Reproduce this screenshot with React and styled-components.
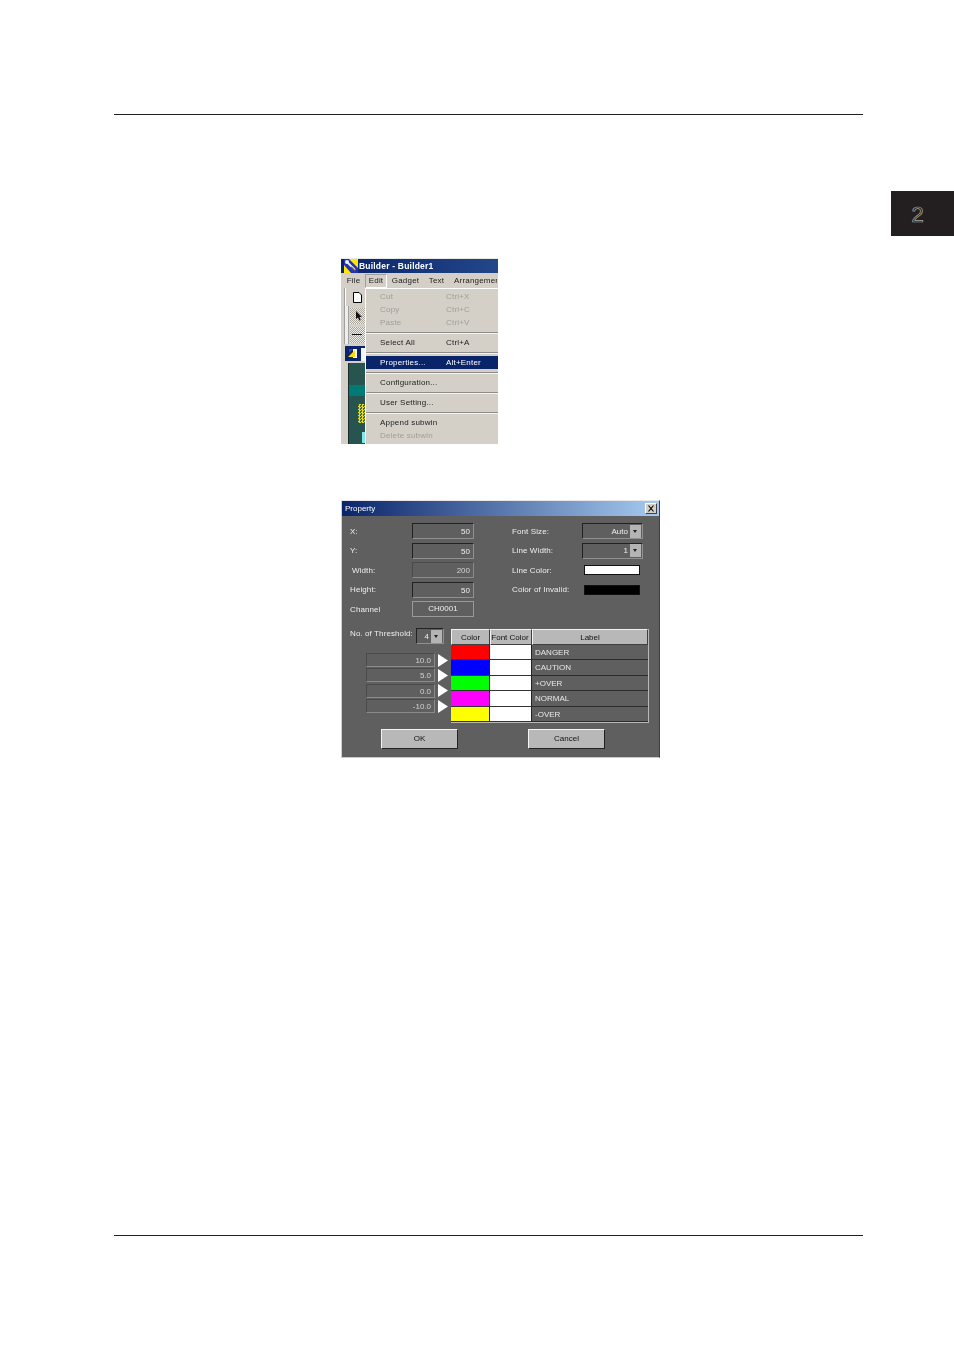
import React from 'react'
import styled, { createGlobalStyle } from 'styled-components'

const GlobalStyle = createGlobalStyle`
  html, body {
    margin: 0;
    padding: 0;
    background: #ffffff;
  }
  * {
    box-sizing: border-box;
  }
`

const menuItems = [
  { label: 'Cut', keys: 'Ctrl+X', off: true },
  { label: 'Copy', keys: 'Ctrl+C', off: true },
  { label: 'Paste', keys: 'Ctrl+V', off: true },
  { sep: true },
  { label: 'Select All', keys: 'Ctrl+A' },
  { sep: true },
  { label: 'Properties...', keys: 'Alt+Enter', active: true },
  { sep: true },
  { label: 'Configuration...' },
  { sep: true },
  { label: 'User Setting...' },
  { sep: true },
  { label: 'Append subwin' },
  { label: 'Delete subwin', off: true },
]

const leftFields = [
  { label: 'X:', value: '50' },
  { label: 'Y:', value: '50' },
  { label: 'Width:', value: '200', indent: true, soft: true },
  { label: 'Height:', value: '50' },
]

const thresholds = ['10.0', '5.0', '0.0', '-10.0']

const tableRows = [
  { color: '#ff0000', label: 'DANGER' },
  { color: '#0000ff', label: 'CAUTION' },
  { color: '#00ff00', label: '+OVER' },
  { color: '#ff00ff', label: 'NORMAL' },
  { color: '#ffff00', label: '-OVER' },
]

function App() {
  return (
    <>
      <GlobalStyle />
      <Page>
        <HeaderRule />
        <TabRow>
          <SideTab>2</SideTab>
        </TabRow>

        <Figures>
          <MenuShot>
            <AppTitle>
              <svg width="14" height="14" viewBox="0 0 14 14">
                <rect width="14" height="14" fill="#2030c0" />
                <path d="M5 0h9v9z" fill="#ffe800" />
                <path d="M0 6l7 8H0z" fill="#ffe800" />
                <path d="M3 3l8 8" stroke="#e8e8e8" strokeWidth="2" />
                <path d="M7 8l4 4" stroke="#555555" strokeWidth="1.500" />
                <circle cx="3" cy="3" r="2" fill="#f4f4f4" />
              </svg>
              <span>Builder - Builder1</span>
            </AppTitle>
            <MenuBar>
              <MenuName $width={23}>File</MenuName>
              <MenuName $width={22} $open>Edit</MenuName>
              <MenuName $width={37}>Gadget</MenuName>
              <MenuName $width={25}>Text</MenuName>
              <MenuName $width={49} $clipped>Arrangemer</MenuName>
            </MenuBar>
            <MenuBody>
              <ToolStrip>
                <ToolRow>
                  <ToolButton>
                    <svg width="9" height="11" viewBox="0 0 9 11">
                      <path d="M.5.5h5.500L8.500 3v7.500H.5z" fill="#fff" stroke="#000" />
                    </svg>
                  </ToolButton>
                </ToolRow>
                <ToolRow $tall>
                  <ToolButton $dither>
                    <ArrowGlyph width="8" height="10" viewBox="0 0 8 10">
                      <path d="M1 0v8l2-1.500 1.200 3 1.400-.6L4.500 6H7z" fill="#111" />
                    </ArrowGlyph>
                  </ToolButton>
                </ToolRow>
                <ToolRow $tall>
                  <ToolButton $dither>
                    <LineGlyph />
                  </ToolButton>
                </ToolRow>
                <ChildWindow>
                  <ChildTitle>
                    <svg width="10" height="11" viewBox="0 0 10 11">
                      <path d="M5 1h4v9H5z" fill="#f4f4f4" />
                      <path d="M0 9l7-7v7z" fill="#ffd800" />
                      <path d="M1 1h4L1 5z" fill="#3040d0" />
                    </svg>
                    <ChildDoc />
                  </ChildTitle>
                  <ChildCanvas>
                    <TealBar />
                    <CheckerBlock />
                    <CyanBlock />
                  </ChildCanvas>
                </ChildWindow>
              </ToolStrip>
              <Dropdown>
                {menuItems.map((item, i) =>
                  item.sep ? (
                    <MenuSep key={i} />
                  ) : (
                    <MenuItem key={i} $off={item.off} $active={item.active}>
                      <span>{item.label}</span>
                      <span>{item.keys}</span>
                    </MenuItem>
                  )
                )}
              </Dropdown>
            </MenuBody>
          </MenuShot>

          <Dialog>
            <DialogTitle>
              <span>Property</span>
              <CloseBox>
                <svg width="8" height="7" viewBox="0 0 8 7">
                  <path d="M1.500.5l5 6M6.500.5l-5 6" stroke="#000" strokeWidth="1.100" />
                </svg>
              </CloseBox>
            </DialogTitle>
            <DialogBody>
              <TopFields>
                <FieldColumn>
                  {leftFields.map((f) => (
                    <FieldRow key={f.label} $labelWidth={62}>
                      <FieldLabel $indent={f.indent}>{f.label}</FieldLabel>
                      <InputBox $soft={f.soft}>{f.value}</InputBox>
                    </FieldRow>
                  ))}
                  <FieldRow $labelWidth={62}>
                    <FieldLabel>Channel</FieldLabel>
                    <ChannelBox>CH0001</ChannelBox>
                  </FieldRow>
                </FieldColumn>
                <FieldColumn>
                  <FieldRow $labelWidth={70}>
                    <FieldLabel>Font Size:</FieldLabel>
                    <SelectBox>
                      Auto
                      <SelectArrow />
                    </SelectBox>
                  </FieldRow>
                  <FieldRow $labelWidth={70}>
                    <FieldLabel>Line Width:</FieldLabel>
                    <SelectBox>
                      1
                      <SelectArrow />
                    </SelectBox>
                  </FieldRow>
                  <FieldRow $labelWidth={70}>
                    <FieldLabel>Line Color:</FieldLabel>
                    <Swatch $color="#ffffff" />
                  </FieldRow>
                  <FieldRow $labelWidth={70}>
                    <FieldLabel>Color of Invalid:</FieldLabel>
                    <Swatch $color="#000000" />
                  </FieldRow>
                </FieldColumn>
              </TopFields>

              <ThresholdArea>
                <ThresholdLeft>
                  <CountRow>
                    <CountLabel>No. of Threshold:</CountLabel>
                    <CountSelect>
                      4
                      <SelectArrow />
                    </CountSelect>
                  </CountRow>
                  <ThresholdList>
                    {thresholds.map((t) => (
                      <ThresholdRow key={t}>
                        <ThresholdInput>{t}</ThresholdInput>
                        <svg width="10" height="13" viewBox="0 0 10 13">
                          <path d="M0 0l10 6.500L0 13z" fill="#ffffff" />
                        </svg>
                      </ThresholdRow>
                    ))}
                  </ThresholdList>
                </ThresholdLeft>
                <Table>
                  <HeadCell>Color</HeadCell>
                  <HeadCell $tight>Font Color</HeadCell>
                  <HeadCell>Label</HeadCell>
                  {tableRows.map((row) => (
                    <React.Fragment key={row.label}>
                      <ColorCell $color={row.color} />
                      <ColorCell $color="#ffffff" />
                      <LabelCell>{row.label}</LabelCell>
                    </React.Fragment>
                  ))}
                </Table>
              </ThresholdArea>

              <ButtonRow>
                <PushButton>OK</PushButton>
                <PushButton>Cancel</PushButton>
              </ButtonRow>
            </DialogBody>
          </Dialog>
        </Figures>

        <FooterRule />
      </Page>
    </>
  )
}

export default App

const Page = styled.div`
  width: 954px;
  height: 1350px;
  background: #ffffff;
  padding-top: 114px;
  overflow: hidden;
  font-family: "Liberation Sans", Arial, sans-serif;
`

const HeaderRule = styled.div`
  width: 749px;
  height: 1px;
  margin-left: 114px;
  background: #231f20;
`

const TabRow = styled.div`
  display: flex;
  justify-content: flex-end;
  margin-top: 76px;
`

const SideTab = styled.div`
  width: 63px;
  height: 45px;
  background: #231f20;
  display: flex;
  align-items: center;
  justify-content: center;
  font-size: 22px;
  line-height: 1;
  padding: 2px 10px 0 0;
  color: #231f20;
  -webkit-text-stroke: 0.7px #a8a8a8;
`

const Figures = styled.div`
  margin-left: 341px;
  margin-top: 22px;
  height: 977px;
  display: flex;
  flex-direction: column;
  align-items: flex-start;
  gap: 56px;
`

const MenuShot = styled.div`
  width: 157px;
  height: 186px;
  background: #d4d0c8;
  border-top: 1px solid #e8e8e8;
  overflow: hidden;
  font-size: 8px;
  color: #222222;
  display: flex;
  flex-direction: column;
  filter: blur(0.3px);
`

const AppTitle = styled.div`
  height: 14px;
  flex: none;
  display: flex;
  align-items: center;
  gap: 1px;
  padding-left: 3px;
  background: linear-gradient(90deg, #0a246a, #23478a);
  color: #ffffff;
  font-weight: bold;
  font-size: 8.500px;
  letter-spacing: 0.2px;
  white-space: nowrap;
  overflow: hidden;
`

const MenuBar = styled.div`
  height: 15px;
  flex: none;
  display: flex;
  align-items: center;
  padding-left: 1px;
  white-space: nowrap;
  background: #d4d0c8;
  overflow: hidden;
`

const MenuName = styled.div`
  width: ${(p) => p.$width}px;
  flex: none;
  height: 14px;
  line-height: 12px;
  text-align: ${(p) => (p.$clipped ? 'left' : 'center')};
  padding-left: ${(p) => (p.$clipped ? '4px' : '0')};
  letter-spacing: 0.2px;
  overflow: hidden;
  border: 1px solid transparent;
  ${(p) => p.$open && 'border-color: #a0a0a0 #ffffff #ffffff #a0a0a0;'}
`

const MenuBody = styled.div`
  flex: 1;
  display: flex;
  min-height: 0;
`

const ToolStrip = styled.div`
  width: 24px;
  flex: none;
  display: flex;
  flex-direction: column;
  background: #d4d0c8;
`

const ToolRow = styled.div`
  height: ${(p) => (p.$tall ? '19px' : '18px')};
  flex: none;
  display: flex;
  justify-content: flex-end;
  align-items: center;
  margin-left: 3px;
  border-left: 1px solid #a0a0a0;
  box-shadow: ${(p) =>
    p.$tall ? 'inset 3px 0 #eeeeea, inset 4px 0 #a0a0a0' : 'inset 1px 0 #ffffff'};
`

const ToolButton = styled.div`
  width: 15px;
  height: 16px;
  display: flex;
  align-items: center;
  justify-content: center;
  ${(p) =>
    p.$dither &&
    'background: repeating-conic-gradient(#eeece6 0 25%, #a8a49c 0 50%) 0 0 / 2px 2px;'}
`

const ArrowGlyph = styled.svg`
  margin-left: 3px;
`

const LineGlyph = styled.div`
  width: 10px;
  height: 1px;
  margin-right: 2px;
  background: #111111;
`

const ChildWindow = styled.div`
  flex: 1;
  margin-top: 2px;
  margin-left: 4px;
  display: flex;
  flex-direction: column;
  background: #d4d0c8;
  min-height: 0;
`

const ChildTitle = styled.div`
  height: 15px;
  flex: none;
  background: #0a246a;
  padding: 2px 0 0 3px;
  display: flex;
  justify-content: space-between;
`

const ChildDoc = styled.div`
  width: 4px;
  height: 13px;
  background: #f4f4f4;
`

const ChildCanvas = styled.div`
  flex: 1;
  margin: 2px 0 0 3px;
  background: #28544f;
  border-left: 1px solid #1a2a2a;
  padding-top: 22px;
  display: flex;
  flex-direction: column;
  align-items: flex-end;
`

const TealBar = styled.div`
  width: 100%;
  height: 11px;
  background: #007a74;
`

const CheckerBlock = styled.div`
  width: 7px;
  height: 19px;
  margin-top: 8px;
  background: repeating-conic-gradient(#e8d820 0 25%, #3a6a30 0 50%) 0 0 / 3px 3px;
`

const CyanBlock = styled.div`
  width: 3px;
  height: 11px;
  margin-top: 9px;
  background: #7fe8e8;
`

const Dropdown = styled.div`
  flex: 1;
  padding-top: 1px;
  background: #d4d0c8;
  border-top: 1px solid #ffffff;
  border-left: 1px solid #ffffff;
`

const MenuItem = styled.div`
  height: 13px;
  line-height: 13px;
  display: grid;
  grid-template-columns: 66px 1fr;
  padding-left: 14px;
  white-space: nowrap;
  letter-spacing: 0.2px;
  color: ${(p) => (p.$off ? '#a09e98' : '#222222')};
  ${(p) => p.$active && 'background: #0a246a; color: #ffffff;'}
`

const MenuSep = styled.div`
  height: 7px;
  padding-top: 3px;
  &::after {
    content: '';
    display: block;
    height: 1px;
    background: #8c8c88;
    box-shadow: 0 1px #f4f4f0;
  }
`

const Dialog = styled.div`
  width: 319px;
  height: 258px;
  background: #5f5f5f;
  border: 1px solid;
  border-color: #e8e8e8 #404040 #c8c8c8 #d0d0d0;
  color: #eeeeee;
  font-size: 8px;
  filter: blur(0.3px);
`

const DialogTitle = styled.div`
  height: 15px;
  display: flex;
  align-items: center;
  justify-content: space-between;
  padding: 0 2px 0 3px;
  background: linear-gradient(90deg, #0a246a, #a6caf0);
  color: #ffffff;
  font-size: 8px;
`

const CloseBox = styled.div`
  width: 12px;
  height: 11px;
  display: flex;
  align-items: center;
  justify-content: center;
  background: #d4d0c8;
  border: 1px solid;
  border-color: #ffffff #404040 #404040 #ffffff;
`

const DialogBody = styled.div`
  padding: 7px 10px 0 8px;
`

const TopFields = styled.div`
  display: grid;
  grid-template-columns: 162px 131px;
`

const FieldColumn = styled.div`
  display: flex;
  flex-direction: column;
  gap: 3.500px;
`

const FieldRow = styled.div`
  height: 16px;
  display: grid;
  grid-template-columns: ${(p) => p.$labelWidth}px 62px;
  align-items: center;
`

const FieldLabel = styled.div`
  white-space: nowrap;
  letter-spacing: 0.1px;
  padding-left: ${(p) => (p.$indent ? '2px' : '0')};
`

const InputBox = styled.div`
  height: 16px;
  line-height: 15px;
  text-align: right;
  padding-right: 3px;
  border: 1px solid;
  border-color: ${(p) =>
    p.$soft ? '#4a4a4a #8a8a8a #8a8a8a #4a4a4a' : '#222222 #909090 #909090 #222222'};
  color: ${(p) => (p.$soft ? '#d4d4d4' : '#eeeeee')};
`

const ChannelBox = styled.div`
  height: 16px;
  line-height: 14px;
  text-align: center;
  border: 1px solid #999999;
`

const SelectBox = styled.div`
  height: 16px;
  width: 61px;
  display: flex;
  align-items: center;
  justify-content: flex-end;
  gap: 2px;
  padding-right: 1px;
  border: 1px solid;
  border-color: #222222 #909090 #909090 #222222;
`

const SelectArrow = styled.div`
  width: 11px;
  height: 13px;
  background: #b4b4b4;
  position: relative;
  &::after {
    content: '';
    position: absolute;
    left: 3px;
    top: 5px;
    border-left: 2.500px solid transparent;
    border-right: 2.500px solid transparent;
    border-top: 3px solid #222222;
  }
`

const Swatch = styled.div`
  width: 56px;
  height: 10px;
  margin-left: 2px;
  background: ${(p) => p.$color};
  border: 1px solid #111111;
`

const ThresholdArea = styled.div`
  display: flex;
  margin-top: 11px;
`

const ThresholdLeft = styled.div`
  width: 101px;
  flex: none;
`

const CountRow = styled.div`
  display: flex;
  align-items: flex-start;
  height: 16px;
`

const CountLabel = styled.div`
  width: 66px;
  white-space: nowrap;
  letter-spacing: 0.1px;
  line-height: 12px;
`

const CountSelect = styled(SelectBox)`
  width: 28px;
`

const ThresholdList = styled.div`
  margin: 9px 0 0 16px;
  display: flex;
  flex-direction: column;
  gap: 1.400px;
`

const ThresholdRow = styled.div`
  display: flex;
  align-items: center;
  gap: 3px;
  height: 14px;
`

const ThresholdInput = styled.div`
  width: 69px;
  height: 14px;
  line-height: 13px;
  text-align: right;
  padding-right: 3px;
  color: #d4d4d4;
  border: 1px solid;
  border-color: #4a4a4a #8a8a8a #8a8a8a #4a4a4a;
`

const Table = styled.div`
  width: 198px;
  height: 94px;
  margin-top: 1px;
  display: grid;
  grid-template-columns: 39px 42px 1fr;
  grid-template-rows: 16px repeat(5, minmax(0, 1fr));
  border-right: 1px solid #b8b8b8;
  border-bottom: 1px solid #b8b8b8;
`

const HeadCell = styled.div`
  display: flex;
  align-items: center;
  justify-content: center;
  padding-right: ${(p) => (p.$tight ? '2px' : '0')};
  background: #b8b8b8;
  color: #111111;
  border: 1px solid;
  border-color: #f0f0f0 #404040 #404040 #f0f0f0;
  white-space: nowrap;
`

const ColorCell = styled.div`
  background: ${(p) => p.$color};
  border-right: 1px solid #222222;
  border-bottom: 1px solid #333333;
`

const LabelCell = styled.div`
  padding: 1px 0 0 3px;
  line-height: 13px;
  color: #e8e8e8;
  background: #5f5f5f;
  border-bottom: 1px solid #2c2c2c;
`

const ButtonRow = styled.div`
  display: flex;
  gap: 70px;
  margin: 6px 0 0 31px;
`

const PushButton = styled.div`
  width: 77px;
  height: 20px;
  padding-bottom: 2px;
  display: flex;
  align-items: center;
  justify-content: center;
  background: #b8b8b8;
  color: #111111;
  border: 1px solid;
  border-color: #f4f4f4 #222222 #222222 #f4f4f4;
`

const FooterRule = styled.div`
  width: 749px;
  height: 1px;
  margin: 0 0 0 114px;
  background: #231f20;
`
